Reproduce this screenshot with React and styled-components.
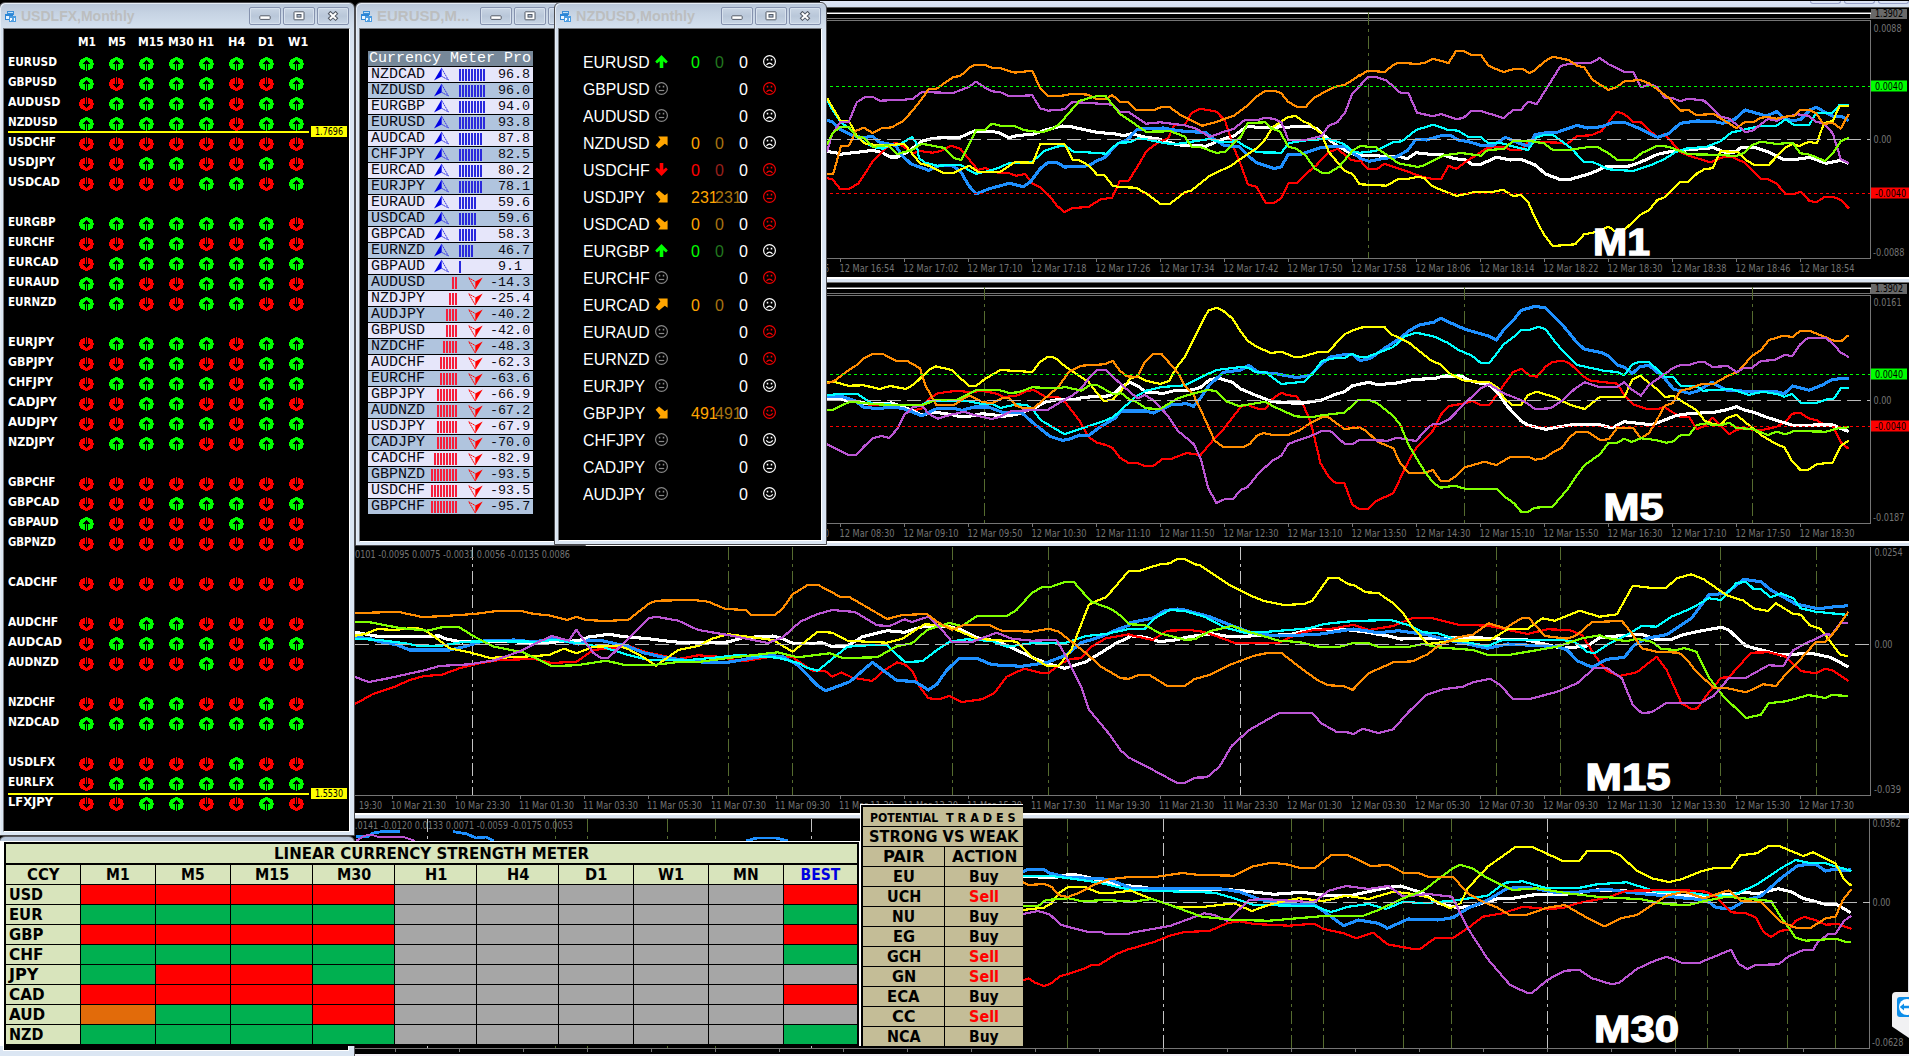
import React, { useLayoutEffect, useRef, useState } from 'react';
import styled, { createGlobalStyle, css } from 'styled-components';

const TAHOMA = "'DejaVu Sans Condensed', 'DejaVu Sans', sans-serif";
const ARIAL = "'Liberation Sans', Arial, sans-serif";
const MONO = "'Liberation Mono', 'Courier New', monospace";

const GlobalStyle = createGlobalStyle`
  html, body { margin: 0; padding: 0; background: #000; overflow: hidden; }
  *, *::before, *::after { box-sizing: border-box; }
`;

/* ---------- text squeezed to a known width ---------- */

const FitBox = styled.span`
  display: inline-block;
  flex: none;
  width: ${(p) => p.$w}px;
  white-space: pre;
  text-align: left;
`;
const FitInner = styled.span`
  display: inline-block;
  transform-origin: 0 50%;
`;
function Fit({ w, children }) {
  const ref = useRef(null);
  const [k, setK] = useState(1);
  useLayoutEffect(() => {
    if (ref.current) setK(w / ref.current.offsetWidth);
  }, [w, children]);
  return (
    <FitBox $w={w}>
      <FitInner ref={ref} style={{ transform: `scaleX(${k})` }}>{children}</FitInner>
    </FitBox>
  );
}

/* ---------- desktop and windows ---------- */

const Desktop = styled.main`
  position: relative;
  width: 1909px;
  height: 1056px;
  overflow: hidden;
  background: #000;
  font-family: ${TAHOMA};
  font-stretch: condensed;
`;

const WindowFrame = styled.section`
  position: absolute;
  left: ${(p) => p.$x}px;
  top: ${(p) => p.$y}px;
  width: ${(p) => p.$w}px;
  height: ${(p) => p.$h}px;
  display: flex;
  flex-direction: column;
  padding: 0 4px 3px 3px;
  border: 1px solid #4b4b4f;
  border-radius: 6px 6px 0 0;
  background: linear-gradient(#b7c5d8 0, #c6d3e3 10px, #d5e1ef 26px, #dbe6f3 60px);
  box-shadow: inset 1px 1px 0 #e6edf6;
`;
const TitleBar = styled.header`
  display: flex;
  align-items: center;
  height: 25px;
  flex: none;
  padding: 1px 1px 0 2px;
`;
const TitleText = styled.div`
  flex: 1;
  min-width: 0;
  margin-left: 5px;
  overflow: hidden;
  font: bold 14.5px/20px ${ARIAL};
  color: #bcbebf;
`;
const Buttons = styled.div`
  display: flex;
  gap: 2px;
  flex: none;
`;
const FrameButton = styled.span`
  display: flex;
  align-items: center;
  justify-content: center;
  width: 32px;
  height: 18px;
  border: 1px solid #8592ae;
  border-radius: 2px;
  background: linear-gradient(#c9d5e4, #b9c7d9 50%, #c8d5e5);
  box-shadow: inset 0 0 0 1px #d7e1ed;
`;
const Client = styled.div`
  position: relative;
  flex: 1;
  min-height: 0;
  overflow: hidden;
  background: #000;
  border: 1px solid;
  border-color: #77797e #fff #fff #77797e;
`;

function AppIcon() {
  return (
    <svg width="11" height="11" viewBox="0 0 11 11" shapeRendering="crispEdges">
      <rect x="2" y="0" width="7" height="4" fill="#3c8fd8" />
      <rect x="3" y="1" width="5" height="1" fill="#bfe0fa" />
      <rect x="0" y="3" width="8" height="6" fill="#2d86d6" />
      <rect x="1" y="5" width="6" height="3" fill="#e8f4ff" />
      <rect x="4" y="5" width="7" height="6" fill="#4a9be0" />
      <rect x="5" y="7" width="5" height="3" fill="#f4faff" />
      <path d="M6 9h1v-2h1v2h1" stroke="#5aa4e2" fill="none" />
    </svg>
  );
}
function Glyph({ kind }) {
  return (
    <svg width="12" height="10" viewBox="0 0 12 10">
      {kind === 'min' && <rect x=".8" y="4.8" width="10.400" height="3.600" rx=".8" fill="#fff" stroke="#535a66" strokeWidth="1" />}
      {kind === 'max' && (
        <>
          <rect x="1" y=".8" width="10" height="8" rx=".6" fill="#fff" stroke="#535a66" />
          <rect x="4" y="3.5" width="4" height="2.600" fill="#aab8cc" stroke="#535a66" />
        </>
      )}
      {kind === 'close' && (
        <>
          <path d="M2 1.2 10 8.6M10 1.2 2 8.6" stroke="#535a66" strokeWidth="4" />
          <path d="M2.8 1.9 9.2 7.9M9.2 1.9 2.8 7.9" stroke="#fff" strokeWidth="2" />
        </>
      )}
    </svg>
  );
}
function Win({ x, y, w, h, title, titleWidth, children }) {
  return (
    <WindowFrame $x={x} $y={y} $w={w} $h={h}>
      <TitleBar>
        <AppIcon />
        <TitleText><Fit w={titleWidth}>{title}</Fit></TitleText>
        <Buttons>
          <FrameButton><Glyph kind="min" /></FrameButton>
          <FrameButton><Glyph kind="max" /></FrameButton>
          <FrameButton><Glyph kind="close" /></FrameButton>
        </Buttons>
      </TitleBar>
      <Client>{children}</Client>
    </WindowFrame>
  );
}

/* ---------- signal matrix ---------- */

const FRAMES = [['M1', 18], ['M5', 18], ['M15', 26], ['M30', 26], ['H1', 16], ['H4', 17], ['D1', 16], ['W1', 20]];
const SIGNALS = `EURUSD UUUUUUUU 49
GBPUSD UDUUUDDU 49
AUDUSD DUUUUDUU 52
NZDUSD UUUUUDUU 49
USDCHF DDDDDDDD 48
USDJPY DDUUDDUD 47
USDCAD DDDDUUDU 52
-
EURGBP UUUUUUUD 48
EURCHF DDUUDDUD 47
EURCAD DUUUUUUU 51
EURAUD UUDDUUUD 51
EURNZD UUDDUUDD 48
-
EURJPY DUUUUDUU 46
GBPJPY DDUUDDUU 46
CHFJPY DUUUUDUU 45
CADJPY DDUUDDUD 49
AUDJPY DDUUUDUU 49
NZDJPY DUUUDDUU 46
-
GBPCHF DDDDDDDD 47
GBPCAD DDDUUUDU 51
GBPAUD UDDDDUDD 51
GBPNZD DDDDDDDD 48
-
CADCHF DDDDDDDD 50
-
AUDCHF DDUUDDDD 50
AUDCAD DUUUUDUU 54
AUDNZD DDDDUDDD 51
-
NZDCHF DDUUDDUD 47
NZDCAD UUUUUUUU 51
-
USDLFX DDDDDUDD 47
EURLFX DUUUUUUU 46
LFXJPY DDUUDDUD 45`.split('\n').map((l) => l.split(' '));

const SignalGrid = styled.div`
  display: grid;
  grid-template-columns: 70px repeat(8, 30px);
  grid-auto-rows: 20px;
  padding: 4px 0 0 4px;
  color: #fff;
  font-weight: bold;
  font-size: 12.5px;
  line-height: 17px;
`;
const SignalCell = styled.div`
  padding: ${(p) => (p.$icon ? '4px 0 0 1px' : '0')};
  line-height: ${(p) => (p.$icon ? 0 : '17px')};
`;
const PriceMark = styled.div`
  position: absolute;
  left: 4px;
  right: 2px;
  top: ${(p) => p.$y}px;
  display: flex;
  align-items: center;
  gap: 2px;
  height: 11px;
  &::before {
    content: '';
    width: 301px;
    height: 2px;
    background: #ff0;
  }
`;
const PriceTag = styled.span`
  display: flex;
  justify-content: center;
  width: 36px;
  height: 11px;
  background: #ff0;
  color: #000;
  font-size: 10.5px;
  line-height: 11px;
`;

function RoundArrow({ up }) {
  const fill = up ? '#00ff00' : '#ff0000';
  return (
    <svg width="15" height="14" viewBox="0 0 15 14" shapeRendering="crispEdges">
      <g transform={up ? undefined : 'matrix(1 0 0 -1 0 14)'}>
        <ellipse cx="7.5" cy="7" rx="7.3" ry="6.7" fill={fill} />
        <path d="M7 3h1v1h1v1h1v1h1v1H9v7H8V7H7v7H6V7H4V6h1V5h1V4h1z" fill="#000" />
      </g>
    </svg>
  );
}
function SignalMatrix() {
  return (
    <>
      <SignalGrid>
        <SignalCell />
        {FRAMES.map(([f, w]) => <SignalCell key={f}><Fit w={w}>{f}</Fit></SignalCell>)}
        {SIGNALS.map(([name, dirs, w], i) =>
          name === '-' ? (
            Array.from({ length: 9 }, (_, j) => <SignalCell key={`${i}-${j}`} />)
          ) : (
            <React.Fragment key={name}>
              <SignalCell><Fit w={+w}>{name}</Fit></SignalCell>
              {[...dirs].map((d, j) => <SignalCell key={j} $icon><RoundArrow up={d === 'U'} /></SignalCell>)}
            </React.Fragment>
          )
        )}
      </SignalGrid>
      <PriceMark $y={97}><PriceTag><Fit w={28}>1.7696</Fit></PriceTag></PriceMark>
      <PriceMark $y={759}><PriceTag><Fit w={28}>1.5530</Fit></PriceTag></PriceMark>
    </>
  );
}

/* ---------- currency meter ---------- */

const METER = [
  ['NZDCAD', 9, '96.8'], ['NZDUSD', 9, '96.0'], ['EURGBP', 9, '94.0'], ['EURUSD', 9, '93.8'],
  ['AUDCAD', 8, '87.8'], ['CHFJPY', 8, '82.5'], ['EURCAD', 8, '80.2'], ['EURJPY', 8, '78.1'],
  ['EURAUD', 6, '59.6'], ['USDCAD', 6, '59.6'], ['GBPCAD', 6, '58.3'], ['EURNZD', 5, '46.7'],
  ['GBPAUD', 1, '9.1'], ['AUDUSD', 2, '-14.3'], ['NZDJPY', 3, '-25.4'], ['AUDJPY', 4, '-40.2'],
  ['GBPUSD', 4, '-42.0'], ['NZDCHF', 5, '-48.3'], ['AUDCHF', 6, '-62.3'], ['EURCHF', 6, '-63.6'],
  ['GBPJPY', 7, '-66.9'], ['AUDNZD', 7, '-67.2'], ['USDJPY', 7, '-67.9'], ['CADJPY', 7, '-70.0'],
  ['CADCHF', 8, '-82.9'], ['GBPNZD', 9, '-93.5'], ['USDCHF', 9, '-93.5'], ['GBPCHF', 9, '-95.7'],
];
const MeterList = styled.div`
  display: grid;
  grid-template-rows: 15px;
  grid-auto-rows: 15px;
  row-gap: 1px;
  width: 165px;
  margin: 22px 0 0 8px;
  font: 15px/16px ${MONO};
  color: #0a0a14;
`;
const MeterHead = styled.div`
  padding-left: 1px;
  background: #778899;
  color: #fff;
  white-space: nowrap;
`;
const MeterRow = styled.div`
  display: grid;
  grid-template-columns: ${(p) => (p.$neg ? '58px 31px 11px 22px 1fr' : '66px 25px 39px 1fr')};
  background: ${(p) => (p.$odd ? '#b0c4de' : '#e6e6fa')};
`;
const MeterName = styled.span`padding-left: 3px;`;
const MeterValue = styled.span`font-size: 13.4px;`;
const Bars = styled.span`
  display: flex;
  align-items: center;
  justify-content: ${(p) => (p.$neg ? 'flex-end' : 'flex-start')};
  gap: 1px;
  height: 15px;
`;
const Bar = styled.i`
  width: 2px;
  height: 12px;
  background: ${(p) => (p.$neg ? '#f5203c' : '#2a2adc')};
`;
const Spacer = styled.span``;

function Dart({ down }) {
  return down ? (
    <svg width="15" height="15" viewBox="0 0 15 15">
      <path d="M7.3 14.5V6.4L14.700 2.600z" fill="#ff0000" />
      <path d="M7.3 14 .8 2.800l6.500 3.800" fill="none" stroke="#ff0000" strokeWidth="1" strokeDasharray="2 .5" />
    </svg>
  ) : (
    <svg width="15" height="15" viewBox="0 0 15 15">
      <path d="M7.700.6V9.600L0 13.600z" fill="#0000e6" />
      <path d="M7.5 1.2 14.400 13 7.500 9.200" fill="none" stroke="#3a3ae6" strokeWidth="1" strokeDasharray="2 .5" />
    </svg>
  );
}
function CurrencyMeter() {
  return (
    <MeterList>
      <MeterHead>Currency Meter Pro</MeterHead>
      {METER.map(([name, n, value], i) => {
        const neg = value[0] === '-';
        const bars = <Bars $neg={neg}>{Array.from({ length: n }, (_, j) => <Bar key={j} $neg={neg} />)}</Bars>;
        return (
          <MeterRow key={name} $neg={neg} $odd={i % 2 === 1}>
            <MeterName>{name}</MeterName>
            {neg ? <>{bars}<Spacer /><Dart down /></> : <><Dart />{bars}</>}
            <MeterValue>{value}</MeterValue>
          </MeterRow>
        );
      })}
    </MeterList>
  );
}

/* ---------- trend list ---------- */

const G = ['#00ff00', '#22771f'];
const O = ['#ffa500', '#a87412'];
const R = ['#ff0000', '#98201c'];
const TRENDS = [
  ['EURUSD', 'up', G, '0', 'sad', 0], ['GBPUSD', 'flat', null, '', 'sad', 1], ['AUDUSD', 'flat', null, '', 'sad', 0],
  ['NZDUSD', 'ne', O, '0', 'sad', 0], ['USDCHF', 'down', R, '0', 'sad', 1], ['USDJPY', 'se', O, '231', 'flat', 1],
  ['USDCAD', 'se', O, '0', 'sad', 1], ['EURGBP', 'up', G, '0', 'sad', 0], ['EURCHF', 'flat', null, '', 'sad', 1],
  ['EURCAD', 'ne', O, '0', 'sad', 0], ['EURAUD', 'flat', null, '', 'sad', 1], ['EURNZD', 'flat', null, '', 'sad', 1],
  ['EURJPY', 'flat', null, '', 'happy', 0], ['GBPJPY', 'se', O, '491', 'happy', 1], ['CHFJPY', 'flat', null, '', 'happy', 0],
  ['CADJPY', 'flat', null, '', 'flat', 0], ['AUDJPY', 'flat', null, '', 'happy', 0],
];
const TrendList = styled.div`
  padding: 20px 0 0 24px;
  font: 16px/27px ${ARIAL};
  color: #fff;
`;
const TrendRow = styled.div`
  display: grid;
  grid-template-columns: 72px 36px 24px 24px 24px 14px;
  height: 27px;
`;
const TrendNum = styled.span`
  width: 0;
  color: ${(p) => p.$c || '#fff'};
`;
const IconCell = styled.span`
  display: flex;
  align-items: center;
  height: 25px;
`;
function Face({ mood, color }) {
  const mouth = { sad: 'M3.500 9.900Q6.500 6.300 9.500 9.900', flat: 'M3.800 8.500h5.400', happy: 'M3.200 7.300Q6.500 11.600 9.800 7.300' }[mood];
  return (
    <svg width="13" height="13" viewBox="0 0 13 13" fill="none" stroke={color} strokeWidth="1.2">
      <circle cx="6.5" cy="6.5" r="5.9" />
      <path d={mouth} />
      <path d="M4.500 3.800v1.800M8.500 3.800v1.800" strokeWidth="1.5" />
    </svg>
  );
}
function TrendArrow({ dir, color }) {
  const straight = 'M6.5 0 12.800 6.600 11 8.600 8.300 6.200V13H4.700V6.200L2 8.600.200 6.600z';
  const diagonal = 'M12.600.400V9.800L9.800 7.800 4 12.600.600 9.200 5.400 3.400 3.200.400z';
  const flip = { up: '', down: 'matrix(1 0 0 -1 0 13)', ne: '', se: 'matrix(1 0 0 -1 0 13)' }[dir];
  return (
    <svg width="13" height="13" viewBox="0 0 13 13">
      <path transform={flip || undefined} d={dir.length === 2 && dir !== 'up' ? diagonal : straight} fill={color} />
    </svg>
  );
}
function Trends() {
  return (
    <TrendList>
      {TRENDS.map(([name, dir, c, n, mood, red]) => (
        <TrendRow key={name}>
          <Fit w={name.endsWith('JPY') ? 62 : 67}>{name}</Fit>
          <IconCell>{dir === 'flat' ? <Face mood="flat" color="#868686" /> : <TrendArrow dir={dir} color={c[0]} />}</IconCell>
          <TrendNum $c={c && c[0]}>{n}</TrendNum>
          <TrendNum $c={c && c[1]}>{n}</TrendNum>
          <TrendNum>0</TrendNum>
          <IconCell><Face mood={mood} color={red ? '#f00000' : '#fff'} /></IconCell>
        </TrendRow>
      ))}
    </TrendList>
  );
}

/* ---------- strength table ---------- */

const STRENGTH = [
  ['USD', 'RRRR', 'R'], ['EUR', 'GGGG', 'G'], ['GBP', 'RRRR', 'R'], ['CHF', 'GGGG', 'G'],
  ['JPY', 'GRRG', '.'], ['CAD', 'RRRR', 'R'], ['AUD', 'OGGR', '.'], ['NZD', 'GGGG', 'G'],
];
const CELL_COLORS = { R: '#ff0000', G: '#00b050', O: '#e26b0a', '.': '#a6a6a6' };
const Sheet = styled.section`
  position: absolute;
  left: 0;
  top: 841px;
  width: 862px;
  height: 205px;
  padding: 1px 2px 0 4px;
  background: #fff;
`;
const StrengthTable = styled.div`
  display: grid;
  grid-template-columns: 74px 74px 74px 81px 81px 81px 81px 74px 74px 74px 73px;
  grid-template-rows: 20px;
  grid-auto-rows: 19px;
  gap: 1px;
  width: 855px;
  height: 204px;
  padding: 2px;
  background: #000;
  color: #000;
  font-weight: bold;
  font-size: 15.5px;
  line-height: 20px;
`;
const SheetCell = styled.div`
  display: flex;
  justify-content: ${(p) => (p.$left ? 'flex-start' : 'center')};
  padding-left: ${(p) => (p.$left ? 3 : 0)}px;
  background: ${(p) => p.$bg || '#d8e4bc'};
  color: ${(p) => p.$color || '#000'};
  ${(p) => p.$wide && css`grid-column: 1 / -1; margin-bottom: 1px;`}
  white-space: nowrap;
`;
const HEADS = [['CCY', 33], ['M1', 24], ['M5', 24], ['M15', 34], ['M30', 34], ['H1', 22], ['H4', 22], ['D1', 22], ['W1', 26], ['MN', 26], ['BEST', 40]];
function StrengthSheet() {
  return (
    <Sheet>
      <StrengthTable>
        <SheetCell $wide><Fit w={315}>LINEAR CURRENCY STRENGTH METER</Fit></SheetCell>
        {HEADS.map(([h, w]) => (
          <SheetCell key={h} $color={h === 'BEST' ? '#0000e0' : '#000'}><Fit w={w}>{h}</Fit></SheetCell>
        ))}
        {STRENGTH.map(([ccy, row, best]) => (
          <React.Fragment key={ccy}>
            <SheetCell $left><Fit w={ccy === 'JPY' ? 30 : ccy === 'AUD' || ccy === 'CAD' ? 36 : 34}>{ccy}</Fit></SheetCell>
            {[...row, '.', '.', '.', '.', '.', best].map((c, j) => <SheetCell key={j} $bg={CELL_COLORS[c]} />)}
          </React.Fragment>
        ))}
      </StrengthTable>
    </Sheet>
  );
}

const TradesBox = styled.section`
  position: absolute;
  left: 860px;
  top: 804px;
  width: 163px;
  height: 242px;
  border: solid #fff;
  border-width: 1px 0 0 1px;
`;
const TradesTable = styled.div`
  display: grid;
  grid-template-columns: 81px 78px;
  grid-template-rows: 19px;
  grid-auto-rows: 19px;
  gap: 1px;
  height: 241px;
  padding: 2px 0 0 2px;
  background: #000;
  font-weight: bold;
  font-size: 15.5px;
  line-height: 19px;
`;
const TradeCell = styled.div`
  display: flex;
  align-items: center;
  justify-content: center;
  gap: 8px;
  ${(p) => p.$wide && css`grid-column: 1 / -1;`}
  padding-top: ${(p) => (p.$small ? 3 : 1)}px;
  background: #c4bd97;
  color: ${(p) => p.$color || '#000'};
  font-size: ${(p) => (p.$small ? 12.5 : 15.5)}px;
  line-height: ${(p) => (p.$small ? 16 : 19)}px;
`;
const TRADES = [['EU', 1, 22], ['UCH', 0, 34], ['NU', 1, 23], ['EG', 1, 22], ['GCH', 0, 34], ['GN', 0, 24], ['ECA', 1, 33], ['CC', 0, 23], ['NCA', 1, 34]];
function TradesPanel() {
  return (
    <TradesBox>
      <TradesTable>
        <TradeCell $wide $small><Fit w={68}>POTENTIAL</Fit><Fit w={70}>T R A D E S</Fit></TradeCell>
        <TradeCell $wide><Fit w={149}>STRONG VS WEAK</Fit></TradeCell>
        <TradeCell><Fit w={42}>PAIR</Fit></TradeCell>
        <TradeCell><Fit w={65}>ACTION</Fit></TradeCell>
        {TRADES.map(([p, buy, w]) => (
          <React.Fragment key={p}>
            <TradeCell><Fit w={w}>{p}</Fit></TradeCell>
            <TradeCell $color={buy ? '#000' : '#ff0000'}><Fit w={30}>{buy ? 'Buy' : 'Sell'}</Fit></TradeCell>
          </React.Fragment>
        ))}
      </TradesTable>
    </TradesBox>
  );
}

/* ---------- charts ---------- */

const ChartWindow = styled.section`
  position: absolute;
  left: ${(p) => p.$x}px;
  top: ${(p) => p.$y}px;
  width: ${(p) => 1909 - p.$x}px;
  height: ${(p) => p.$h}px;
  display: flex;
  flex-direction: column;
  background: #000;
`;
const Plot = styled.svg`
  display: block;
  flex: 1;
  min-height: 0;
  width: 100%;
  overflow: visible;
`;
const TopEdge = styled.div`
  display: flex;
  justify-content: flex-end;
  gap: 3px;
  height: 7px;
  margin-top: 1px;
  flex: none;
  background: linear-gradient(#dfe6f5, #d3dff0);
  border-bottom: 1px solid #5a5a5a;
`;
const TopButton = styled.i`
  width: 31px;
  height: 3px;
  border: 1px solid #98a2c8;
  border-top: 0;
  border-radius: 0 0 3px 3px;
`;
const BottomEdge = styled.div`
  height: 6px;
  flex: none;
  border-bottom: 1px solid #707070;
  background: linear-gradient(#fff 2px, #dbe5f2 2px);
`;

const C = { w: '#ffffff', b: '#1e90ff', a: '#00ffff', y: '#ffff00', o: '#ff8c00', p: '#ba55d3', g: '#7fff00', r: '#ff0000' };

// Each series is sampled in one or more tiles: origin and samples per pixel on both axes.
const T = {
  m1: [[820, 0, 2.8509, 3], [1360, 0, 2.8561, 3]],
  m5: [[820, 275, 2.8509, 3], [1360, 275, 2.8561, 3]],
  m15: [[350, 540, 2.0103, 3], [1130, 540, 2.0128, 3]],
  m30: [[600, 790, 2.6133, 3], [1130, 540, 2.0128, 3]],
};
const toPoints = (tiles, parts) =>
  parts.flatMap((part, i) => {
    const [ox, oy, kx, ky] = tiles[i];
    return part.trim().split(/\s+/).map((s) => {
      const [x, y] = s.split(',').map(Number);
      return `${(ox + x / kx).toFixed(1)},${(oy + y / ky).toFixed(1)}`;
    });
  }).join(' ');

const M1 = [
  ['w', '20,455 40,457 58,463 80,460 120,455 150,451 180,459 200,471 222,471 245,459 265,444 290,424 310,418 340,413 370,413 400,412 420,402 440,393 490,394 515,400 538,413 560,407 610,402 650,388 690,378 710,379 745,387 790,397 850,403 865,407 890,401 925,411 965,417 1010,432 1040,437 1080,437 1100,439 1120,430 1155,415 1180,408 1200,392 1220,378 1250,383 1275,382 1300,386 1310,377 1330,383 1350,379 1400,380 1420,388 1440,409 1470,434 1500,452 1520,462 1538,466',
    '0,467 50,467 70,471 110,469 135,476 160,458 200,463 240,465 270,476 300,479 320,493 345,493 390,472 430,480 460,478 500,495 530,522 570,538 600,538 660,520 700,501 770,498 800,487 850,463 880,456 930,450 1010,443 1040,456 1070,456 1090,442 1130,443 1170,457 1210,479 1240,479 1285,472 1330,490 1375,481 1396,491'],
  ['r', '20,535 35,537 58,567 82,567 110,550 150,485 190,443 215,428 240,441 265,460 285,453 320,458 345,453 375,437 400,446 425,478 450,510 470,504 500,517 540,520 560,527 585,522 605,550 628,562 655,589 675,617 697,636 720,624 765,621 800,598 833,593 855,543 880,542 905,500 930,455 950,437 970,425 992,415 1010,375 1040,375 1060,338 1085,326 1130,335 1155,362 1175,430 1200,495 1220,553 1245,561 1270,608 1295,608 1315,595 1335,550 1360,548 1385,522 1415,496 1450,457 1475,447 1515,480 1538,484',
    '0,481 22,506 50,506 70,491 120,509 180,531 205,536 232,537 253,497 275,507 300,487 365,443 408,440 430,450 460,450 480,425 570,428 590,433 620,408 660,406 690,393 733,335 755,342 780,366 802,367 850,413 870,402 915,456 940,467 1000,487 1040,470 1060,470 1100,488 1145,536 1165,538 1190,551 1215,582 1240,582 1258,575 1283,602 1303,607 1328,590 1350,590 1373,600 1396,625'],
  ['b', '20,361 35,365 60,390 90,405 120,413 150,409 170,427 215,436 235,468 260,492 310,511 340,497 375,496 400,513 425,558 445,582 480,567 540,550 580,560 600,545 628,506 650,487 675,487 697,501 740,500 765,497 790,482 810,474 850,430 875,420 905,388 980,384 1020,392 1100,398 1130,423 1155,437 1195,440 1220,467 1245,488 1295,506 1315,500 1335,463 1370,463 1430,442 1495,438 1520,460 1538,472',
    '0,475 25,484 70,475 100,472 135,452 160,418 190,420 235,406 260,407 280,420 310,425 345,436 380,436 415,412 455,430 480,438 500,404 530,398 560,398 620,376 650,384 690,380 720,368 755,367 800,386 850,412 880,402 915,370 960,363 1010,364 1035,370 1070,358 1100,330 1160,348 1190,335 1215,358 1240,362 1260,357 1285,330 1303,322 1350,349 1375,349 1396,362'],
  ['a', '20,300 30,320 60,368 85,385 110,415 130,430 155,442 180,446 200,436 225,435 262,411 275,430 282,474 300,488 335,497 400,494 425,511 445,521 480,513 510,503 540,489 605,485 640,453 675,440 700,437 722,455 760,457 815,461 850,428 885,427 905,415 930,418 975,428 1010,433 1060,425 1110,417 1145,427 1190,424 1210,438 1245,457 1315,458 1335,430 1375,422 1450,416 1495,433 1520,455 1538,458',
    '0,458 45,453 95,427 120,424 160,390 210,374 250,389 280,392 310,411 345,411 365,429 405,430 440,440 480,450 505,412 530,404 550,404 600,442 640,486 665,486 710,508 780,513 830,496 870,477 900,457 930,446 990,440 1030,424 1060,398 1100,388 1150,377 1190,377 1215,358 1240,375 1283,375 1303,339 1350,338 1370,314 1396,314'],
  ['y', '20,294 58,362 82,362 105,408 130,432 185,437 240,431 285,490 310,497 350,518 382,518 425,497 450,515 515,515 555,487 607,488 628,432 697,432 720,479 740,481 765,496 790,524 810,525 835,557 850,561 900,563 930,580 970,611 998,611 1040,577 1060,571 1110,528 1170,498 1220,462 1245,445 1270,417 1290,382 1335,351 1355,348 1375,362 1400,375 1430,401 1450,455 1495,512 1518,522 1538,553',
    '0,553 75,557 110,537 135,537 165,530 185,535 205,558 275,588 330,576 375,577 408,569 438,588 460,585 480,606 500,654 525,703 550,738 615,733 640,703 680,695 710,680 730,695 760,685 800,645 825,631 850,599 870,592 915,546 938,545 965,518 985,507 1007,505 1030,453 1080,457 1105,482 1125,494 1168,494 1190,470 1215,442 1235,432 1255,438 1280,426 1305,429 1325,370 1350,363 1370,318 1396,317'],
  ['p', '20,455 35,402 58,366 82,365 105,307 130,290 150,290 170,302 240,299 265,296 290,276 380,279 425,260 445,245 470,263 490,274 515,277 540,289 605,286 628,325 650,332 697,328 720,306 780,310 835,314 855,335 880,336 930,371 970,367 1040,376 1075,387 1110,411 1150,396 1180,386 1210,361 1250,359 1270,353 1295,357 1315,367 1335,420 1385,420 1430,408 1450,377 1475,367 1497,337 1518,280 1538,258',
    '0,257 22,231 45,231 75,241 115,278 138,279 163,338 208,349 232,342 275,357 295,354 318,333 345,333 410,354 437,330 460,329 480,305 505,312 550,236 573,198 597,191 660,189 685,174 710,193 755,216 780,216 802,262 830,253 850,263 870,293 890,294 915,303 937,296 983,302 1030,350 1055,356 1080,378 1100,396 1120,393 1165,357 1190,362 1215,351 1250,343 1280,347 1303,365 1325,371 1350,400 1373,477 1396,489'],
  ['o', '20,521 38,521 60,438 82,437 103,392 125,383 150,399 175,385 205,382 240,361 280,311 310,268 332,266 380,231 400,228 430,200 445,194 468,194 490,203 515,205 555,218 605,212 628,265 650,287 690,287 720,281 765,284 785,296 815,297 833,285 855,305 880,307 902,331 955,329 975,320 995,320 1025,343 1050,356 1090,377 1130,366 1160,354 1180,347 1220,316 1245,290 1270,272 1295,272 1315,280 1335,306 1360,320 1385,321 1405,296 1450,269 1470,260 1495,255 1520,239 1538,225',
    '0,227 22,212 70,216 95,195 110,188 165,192 185,188 208,176 253,189 275,152 297,153 317,165 345,165 368,198 410,216 440,207 465,207 483,219 500,210 525,186 550,170 595,180 620,197 640,202 665,240 710,270 735,260 755,244 800,240 825,250 880,292 915,332 938,330 960,345 1010,342 1075,384 1100,366 1125,366 1145,353 1165,351 1190,356 1215,350 1240,347 1258,330 1285,330 1303,340 1323,372 1350,368 1373,386 1396,341'],
  ['g', '20,435 35,400 60,380 82,381 105,410 125,413 150,441 195,435 220,462 260,451 290,431 315,436 355,444 382,474 403,480 445,390 470,390 490,371 515,377 555,378 580,390 630,397 655,390 680,375 740,302 790,288 815,289 855,342 930,395 1000,394 1040,410 1060,440 1085,441 1130,459 1155,455 1200,410 1220,369 1270,367 1290,387 1310,393 1335,440 1360,447 1385,467 1410,505 1430,518 1450,519 1480,500 1520,450 1538,440',
    '0,438 45,442 70,460 110,490 165,501 185,495 240,466 290,459 345,467 365,450 410,447 437,423 480,422 525,430 550,449 600,449 660,440 680,442 710,460 735,480 780,480 805,459 850,437 880,440 940,463 1010,464 1075,468 1100,457 1120,435 1145,425 1190,432 1235,428 1258,460 1285,464 1328,483 1350,460 1373,424 1396,413'],
];
const M5 = [
  ['r', '20,367 60,370 100,378 130,388 230,392 265,408 290,400 310,372 335,355 390,347 430,352 460,347 500,355 525,366 560,362 590,348 610,345 645,367 680,367 700,383 740,437 765,485 790,503 815,510 835,520 855,548 880,564 905,564 925,573 950,573 975,553 1000,552 1045,534 1085,540 1110,508 1150,463 1200,395 1220,390 1250,402 1270,402 1290,372 1315,353 1330,360 1358,364 1380,395 1400,445 1427,565 1450,605 1470,624 1495,625 1518,690 1538,702',
    '0,702 22,702 48,677 95,655 115,610 140,555 160,520 210,465 230,420 255,393 300,385 320,378 345,390 370,390 400,345 437,292 460,281 485,302 505,305 530,275 550,261 580,257 600,266 640,306 660,317 735,326 755,360 780,388 820,402 850,402 870,396 893,412 915,427 940,427 962,462 985,453 1007,428 1030,452 1055,477 1075,465 1100,459 1130,466 1150,465 1190,455 1215,440 1235,416 1258,413 1280,430 1305,436 1328,450 1350,452 1373,502 1396,522'],
  ['w', '20,370 100,378 125,384 155,386 205,384 235,395 265,407 290,420 330,412 370,418 395,424 425,424 460,416 480,418 525,424 560,418 610,400 640,382 680,373 725,374 750,367 820,363 840,355 860,334 885,322 905,332 930,352 980,355 1010,347 1060,345 1085,337 1110,315 1135,309 1175,322 1200,342 1245,362 1290,380 1345,384 1380,384 1430,375 1470,358 1495,350 1518,332 1538,328',
    '0,327 25,322 50,329 105,324 155,313 210,311 240,303 290,303 310,316 370,331 395,355 420,393 460,438 480,451 530,463 560,457 600,450 680,448 720,459 755,440 820,448 840,447 905,421 940,416 1010,412 1045,405 1075,395 1100,406 1120,410 1165,428 1240,452 1300,450 1350,450 1396,470'],
  ['b', '20,364 60,364 100,378 125,397 170,401 200,396 235,400 265,412 290,422 335,400 380,400 405,406 440,396 480,396 520,412 575,413 610,446 655,484 690,496 710,493 740,480 765,482 800,455 840,430 860,408 930,408 950,414 1000,390 1045,386 1065,394 1085,368 1110,330 1150,292 1200,285 1222,271 1250,292 1300,296 1360,308 1400,300 1425,270 1455,246 1500,238 1520,240 1538,256',
    '0,257 30,250 70,220 115,190 140,167 170,150 210,142 230,130 255,142 300,163 350,178 370,184 390,195 410,165 440,133 460,106 500,94 530,99 580,152 620,203 640,222 690,233 710,243 735,270 755,277 778,295 800,275 825,271 870,310 895,342 940,355 965,348 1005,322 1045,345 1080,348 1190,350 1212,356 1235,333 1283,346 1320,330 1350,313 1396,310'],
  ['a', '20,361 60,356 105,356 150,386 240,391 290,390 310,378 425,379 460,387 490,386 515,399 560,388 590,390 605,402 630,436 697,478 735,464 800,442 835,427 900,365 930,347 975,336 1040,331 1080,310 1130,285 1200,276 1220,278 1240,290 1270,292 1315,327 1380,320 1405,296 1430,258 1475,248 1495,250 1515,236 1538,246',
    '0,247 20,246 95,216 130,183 160,173 210,184 250,203 280,224 320,242 345,264 370,264 410,208 440,185 460,166 485,164 510,155 530,163 560,205 595,245 620,270 700,288 735,291 755,301 778,268 800,260 825,260 870,305 895,307 915,332 965,335 980,347 1060,342 1110,360 1150,350 1190,357 1212,365 1235,357 1258,383 1305,383 1330,374 1353,371 1375,338 1396,338'],
  ['y', '20,320 40,320 80,332 125,331 170,342 200,333 245,342 270,326 310,285 330,274 375,285 425,333 445,333 470,312 515,285 605,291 628,260 650,245 670,248 700,275 765,320 790,355 810,378 835,374 860,345 885,310 905,304 930,317 970,327 995,318 1015,280 1040,245 1060,205 1085,150 1107,107 1130,98 1150,108 1175,130 1200,170 1220,198 1245,215 1285,234 1315,230 1350,245 1375,245 1425,230 1450,230 1475,200 1495,178 1520,165 1538,160',
    '0,158 20,156 70,156 90,178 140,203 205,258 230,268 255,295 300,318 370,322 395,340 410,368 435,390 460,390 480,360 505,350 560,368 580,380 610,393 642,402 685,366 755,366 778,313 800,302 845,340 870,366 895,363 960,405 985,437 1010,448 1030,450 1050,428 1075,420 1150,483 1190,508 1212,517 1235,560 1258,585 1280,585 1305,567 1350,563 1373,512 1396,497'],
  ['o', '20,325 40,318 80,287 105,270 125,250 150,237 180,237 215,257 250,259 285,280 300,330 332,391 380,391 425,361 460,380 490,385 520,370 540,370 560,393 580,399 610,399 650,362 680,335 710,290 745,272 810,268 835,258 855,287 875,304 905,306 925,262 950,236 973,236 1020,293 1040,332 1065,360 1090,415 1125,497 1150,516 1207,516 1225,507 1245,482 1265,474 1290,480 1335,480 1365,467 1400,443 1430,427 1450,427 1495,462 1538,457',
    '0,457 20,470 50,500 95,520 115,565 140,594 185,594 208,585 230,617 255,617 275,602 300,577 355,560 390,570 430,545 480,545 500,554 525,550 550,533 575,520 600,485 620,470 650,470 685,495 710,493 735,458 780,458 802,490 825,475 845,440 870,393 893,384 915,347 945,340 975,327 1010,327 1050,303 1080,290 1120,242 1145,226 1168,195 1210,182 1235,186 1258,167 1285,168 1330,187 1355,198 1375,198 1396,180'],
  ['p', '20,508 80,540 103,540 125,515 150,490 175,483 197,489 220,462 240,420 265,397 290,391 310,416 335,431 370,420 410,410 440,420 490,432 515,425 545,408 650,404 680,385 720,361 745,340 765,312 790,286 815,285 855,325 905,370 925,360 950,375 990,420 1020,467 1065,507 1085,550 1107,640 1130,684 1155,672 1178,671 1200,645 1220,635 1250,595 1290,557 1315,542 1335,507 1365,495 1395,485 1430,468 1455,468 1495,506 1520,506 1538,495',
    '0,495 80,497 105,488 160,498 190,462 210,446 230,446 255,433 300,385 345,340 370,328 410,355 440,367 470,380 500,402 545,400 580,375 615,340 642,322 680,335 735,335 755,322 778,345 802,362 825,330 850,312 893,280 915,270 940,270 970,260 985,262 1007,276 1050,273 1075,291 1095,280 1120,278 1145,258 1185,255 1212,240 1235,243 1258,207 1280,188 1328,188 1350,205 1373,233 1396,246'],
  ['g', '20,405 35,405 85,380 125,384 160,388 235,391 290,391 330,375 390,374 445,345 510,345 540,354 565,352 605,337 680,340 700,336 745,347 770,330 790,330 835,357 860,355 880,372 900,380 930,400 970,402 1020,370 1060,357 1105,345 1130,348 1160,380 1195,393 1270,380 1290,393 1355,424 1400,427 1430,421 1495,413 1535,375 1538,375',
    '0,375 25,375 50,385 95,423 115,450 140,512 160,547 185,590 208,622 230,638 270,632 300,641 390,641 410,663 440,685 460,710 480,710 500,698 550,695 595,640 620,600 642,570 685,538 710,503 735,503 755,491 775,501 802,490 845,495 875,503 893,500 915,481 940,480 962,450 990,445 1010,451 1035,450 1055,443 1075,459 1120,462 1165,480 1190,470 1215,478 1240,468 1330,470 1373,458 1396,457'],
];
const M15 = [
  ['w', '10,276 50,288 85,290 180,288 190,296 225,306 260,304 340,306 360,312 420,305 460,302 480,291 520,283 550,290 600,296 640,304 680,309 760,306 790,293 850,288 870,296 890,310 950,309 970,320 1000,318 1030,290 1080,272 1115,277 1150,260 1200,258 1230,270 1260,293 1300,303 1340,330 1380,358 1410,374 1437,385 1480,365 1510,338 1540,310 1566,292',
    '0,287 30,292 60,305 90,300 120,290 165,281 200,290 260,287 320,284 360,270 430,268 470,275 520,288 545,297 620,295 680,291 740,297 800,300 870,325 920,318 945,294 960,290 1030,283 1060,299 1090,298 1110,286 1140,275 1190,262 1205,270 1240,318 1310,345 1370,340 1410,352 1446,381'],
  ['r', '10,492 45,463 90,440 120,420 150,408 185,404 220,385 260,370 300,360 370,357 405,369 455,365 490,330 520,325 560,318 600,338 660,357 700,346 740,350 790,364 840,352 890,352 930,392 955,393 970,410 988,397 1010,413 1050,423 1075,390 1100,367 1115,373 1130,392 1145,440 1163,475 1185,478 1205,468 1230,486 1270,478 1295,460 1320,410 1355,386 1390,399 1405,398 1430,370 1450,356 1470,355 1490,320 1520,295 1566,283',
    '0,285 15,290 45,300 75,272 120,270 150,276 210,308 300,308 340,280 370,270 400,268 450,254 480,270 530,258 570,233 610,235 660,254 720,257 800,282 840,268 885,270 910,285 935,345 960,393 985,408 1020,397 1060,350 1080,390 1110,490 1130,507 1142,505 1165,457 1190,413 1205,412 1250,338 1285,337 1320,350 1350,393 1380,400 1400,386 1415,392 1446,423'],
  ['b', '10,293 40,295 60,305 95,315 120,330 200,330 230,320 270,302 330,300 370,306 410,295 440,306 460,312 480,300 510,303 560,320 590,338 630,352 680,362 720,368 760,367 840,346 870,350 900,375 940,437 955,452 970,445 1005,425 1050,367 1100,422 1135,424 1163,450 1180,432 1200,390 1225,355 1260,355 1290,374 1350,379 1400,368 1440,345 1470,308 1510,290 1540,270 1566,256',
    '0,248 45,235 70,212 95,207 110,210 160,230 200,254 250,281 300,288 380,283 450,267 500,278 540,272 600,285 640,300 720,325 760,312 860,320 880,330 900,362 930,382 960,358 995,352 1015,315 1040,295 1080,284 1130,235 1165,165 1200,160 1235,118 1270,125 1290,150 1340,192 1385,206 1420,200 1446,197'],
  ['a', '10,296 60,300 110,310 140,318 180,318 230,305 290,304 380,305 410,299 460,310 510,322 560,345 600,360 680,360 740,352 780,345 860,353 900,368 920,384 940,392 1000,320 1050,315 1080,315 1115,366 1150,364 1180,330 1205,305 1240,298 1290,303 1320,320 1370,310 1440,308 1480,288 1520,282 1566,267',
    '0,266 30,266 50,235 80,210 110,213 150,230 190,262 230,278 270,276 320,270 360,265 390,252 450,243 525,240 560,255 590,277 620,280 670,305 720,318 750,300 870,300 895,305 920,335 935,340 960,315 1000,285 1030,258 1060,260 1090,230 1130,205 1165,175 1190,180 1220,130 1240,125 1255,147 1270,148 1290,172 1310,160 1335,175 1350,205 1380,215 1446,225'],
  ['y', '10,287 30,282 55,267 90,270 130,263 150,270 170,290 200,325 240,337 280,353 330,352 350,350 400,345 430,326 455,340 490,320 540,318 560,328 590,352 615,377 660,330 700,318 730,295 760,283 800,290 850,300 890,335 940,275 970,278 1000,302 1080,308 1110,296 1155,253 1200,257 1260,296 1340,305 1370,350 1400,377 1425,377 1450,330 1485,195 1500,183 1520,172 1566,92',
    '0,92 20,92 60,73 80,70 95,57 110,57 130,73 140,75 200,135 240,165 270,183 310,195 350,192 367,182 400,113 420,115 440,133 450,135 475,157 500,159 530,190 550,220 570,265 600,312 650,302 725,300 760,268 800,267 830,235 855,242 905,212 945,230 980,223 1012,137 1045,143 1080,143 1100,115 1130,103 1155,118 1200,165 1235,182 1255,205 1285,213 1300,190 1335,222 1350,224 1368,256 1390,267 1430,345 1446,348'],
  ['g', '10,246 40,247 100,264 155,272 190,260 220,262 250,290 290,320 350,338 405,378 455,376 515,362 550,374 610,375 660,366 700,366 760,354 860,337 900,352 965,340 990,354 1060,352 1100,318 1130,310 1160,270 1205,249 1230,258 1260,228 1320,228 1340,210 1370,160 1390,142 1410,140 1440,125 1455,126 1490,185 1530,207 1550,228 1566,253',
    '0,253 30,255 60,280 110,299 130,298 160,274 205,258 240,276 300,302 340,306 380,320 420,321 450,309 480,310 500,321 560,321 590,312 620,322 690,330 720,345 765,344 860,320 910,295 945,286 960,294 1000,304 1020,296 1050,305 1070,327 1100,330 1115,324 1140,335 1165,412 1195,470 1240,534 1270,524 1285,490 1320,484 1345,474 1365,465 1400,474 1412,465 1446,468'],
  ['p', '10,411 38,426 70,417 150,391 180,378 240,373 290,361 340,335 370,313 405,288 440,302 455,269 490,340 505,354 520,353 570,280 600,235 615,230 660,242 700,270 760,285 840,309 870,292 905,245 940,222 970,210 1015,216 1060,256 1085,258 1115,238 1130,246 1163,230 1190,270 1210,305 1250,306 1300,278 1330,296 1370,302 1420,300 1440,350 1470,440 1485,508 1525,580 1550,632 1566,653',
    '0,654 40,685 95,729 110,729 130,713 155,712 180,680 205,617 240,570 300,519 367,519 385,550 415,575 435,576 450,582 468,566 500,579 530,568 560,517 595,466 630,448 670,440 690,427 725,416 745,435 770,476 805,477 860,455 900,430 935,384 960,384 990,415 1012,495 1030,519 1050,517 1080,488 1150,488 1175,467 1205,415 1240,413 1285,376 1315,378 1335,330 1365,307 1400,283 1412,284 1430,249 1446,248'],
  ['o', '10,219 70,217 95,215 145,231 180,229 250,222 300,212 345,213 370,222 400,226 437,240 455,230 475,240 515,243 560,239 600,192 615,182 690,180 720,185 755,207 795,210 807,225 855,224 870,205 890,163 920,135 940,134 985,170 1005,172 1080,237 1110,225 1160,222 1180,245 1210,270 1235,254 1285,255 1310,272 1370,275 1405,266 1425,275 1480,340 1510,380 1550,415 1566,416',
    '0,415 20,404 40,406 75,438 110,438 130,417 160,405 200,375 250,347 280,338 305,339 340,380 380,423 400,436 430,438 448,450 480,400 530,367 570,364 600,342 620,318 660,292 690,284 722,250 755,265 790,233 803,234 835,288 880,296 900,285 930,246 990,243 1010,280 1030,325 1060,335 1105,338 1120,357 1140,395 1175,443 1200,444 1240,457 1275,433 1300,438 1320,403 1350,357 1380,307 1400,305 1420,272 1446,215'],
];
const M30 = [
  ['w', '1105,259 1190,263 1225,253 1245,255 1280,263 1310,272 1350,282 1383,288',
    '0,1038 20,1040 60,1050 140,1050 190,1048 230,1053 290,1063 345,1057 390,1065 440,1068 480,1055 520,1042 545,1038 590,1060 620,1090 660,1103 690,1098 740,1076 770,1075 810,1065 880,1062 940,1050 1000,1053 1040,1060 1100,1065 1150,1070 1190,1065 1240,1057 1260,1062 1305,1046 1330,1055 1355,1075 1400,1093 1425,1095 1450,1118'],
  ['b', '1105,245 1118,238 1158,238 1175,249 1220,262 1280,265 1330,268 1383,292',
    '0,1045 60,1045 180,1046 220,1055 260,1078 320,1093 370,1093 400,1125 430,1157 460,1140 500,1150 518,1165 560,1137 620,1140 650,1133 680,1105 720,1080 760,1045 800,1042 860,1058 900,1057 960,1048 1010,1058 1060,1065 1120,1075 1160,1080 1180,1103 1210,1106 1240,1080 1270,1068 1310,1015 1345,976 1380,973 1400,993 1420,987 1440,992 1452,988'],
  ['a', '1105,259 1180,258 1240,267 1300,277 1350,290 1383,299',
    '0,1050 60,1053 170,1058 210,1075 250,1095 370,1098 405,1116 440,1100 480,1092 515,1107 550,1085 590,1090 650,1082 720,1067 755,1028 790,1024 840,1045 900,1045 940,1033 1000,1027 1060,1055 1110,1055 1160,1065 1210,1068 1260,1035 1310,985 1340,960 1365,968 1400,970 1452,993'],
  ['r', '1105,571 1120,565 1135,577 1160,588 1180,580 1200,560 1265,536 1285,525 1305,524 1350,492 1383,477',
    '0,1227 50,1205 80,1187 110,1176 160,1173 195,1150 220,1144 250,1152 320,1157 370,1151 390,1167 430,1180 455,1195 490,1178 518,1213 570,1227 585,1226 615,1193 650,1194 680,1165 710,1130 750,1120 790,1100 830,1106 870,1105 900,1090 960,1073 1000,1052 1110,1050 1160,1055 1180,1070 1210,1117 1240,1120 1260,1133 1275,1175 1290,1191 1310,1172 1325,1170 1340,1142 1357,1131 1380,1140 1400,1154 1425,1152 1452,1167'],
  ['y', '1105,360 1160,353 1180,340 1200,308 1225,290 1265,290 1305,309 1340,308 1383,303',
    '0,1051 40,1075 90,1100 140,1102 210,1090 245,1113 290,1090 340,1075 390,1083 435,1067 480,1077 530,1055 570,1062 600,1072 645,1105 665,1090 680,1045 720,980 775,922 810,921 870,962 905,962 920,933 965,932 985,944 1020,992 1050,1015 1085,1026 1110,1018 1150,994 1180,983 1210,983 1228,946 1262,940 1285,918 1305,917 1355,948 1375,937 1420,970 1437,1018 1452,1037'],
  ['p', '1105,372 1145,363 1175,373 1205,405 1280,427 1310,426 1320,432 1383,432',
    '0,1179 80,1158 150,1120 170,1125 195,1142 240,1080 270,1077 370,1087 400,1052 435,1038 480,1047 520,1038 550,1070 600,1062 648,1070 680,1165 720,1257 765,1335 800,1359 810,1358 840,1320 875,1292 905,1290 930,1315 970,1333 985,1328 1020,1287 1050,1266 1080,1250 1110,1268 1145,1269 1210,1229 1225,1272 1243,1287 1260,1275 1305,1273 1325,1250 1355,1230 1375,1229 1385,1205 1405,1183 1420,1182 1437,1143 1452,1127'],
  ['g', '1105,347 1145,348 1165,330 1225,325 1260,334 1320,330 1383,334',
    '0,1086 45,1077 80,1095 145,1130 210,1140 280,1142 390,1128 470,1127 500,1110 550,1075 590,1052 650,985 665,974 690,986 720,1015 770,1050 820,1045 880,1060 940,1070 1030,1078 1080,1093 1125,1095 1150,1085 1200,1070 1290,1083 1310,1130 1340,1193 1360,1202 1420,1196 1440,1205 1452,1206'],
  ['o', '1105,277 1120,285 1160,282 1180,290 1198,315 1222,321 1250,310 1290,285 1330,268 1383,261',
    '0,1010 55,1010 105,999 140,1005 210,1007 245,980 285,968 320,974 340,983 373,983 405,945 437,944 485,978 520,975 550,998 580,999 600,1010 650,1010 680,1060 710,1085 740,1103 765,1126 795,1126 840,1103 875,1095 920,1133 955,1159 990,1134 1020,1125 1080,1067 1115,1055 1155,1075 1205,1051 1230,1082 1270,1087 1310,1145 1340,1163 1370,1164 1400,1135 1420,1130 1435,1080 1452,1048'],
];

const Series = ({ tiles, data }) => (
  <g fill="none" strokeLinejoin="round" shapeRendering="crispEdges">
    {data.map(([c, ...parts]) => (
      <polyline key={c} points={toPoints(tiles, parts)} stroke={C[c]} strokeWidth={c === 'w' || c === 'b' ? 3.1 : 2.2} />
    ))}
  </g>
);

const SvgText = styled.text`
  font-family: ${TAHOMA};
  font-stretch: condensed;
  font-size: 10.6px;
`;
const BigLabel = styled.text`
  font: bold 37px ${ARIAL};
  fill: #fff;
  stroke: #fff;
  stroke-width: 1.3px;
`;
const Txt = ({ x, y, w, fill = '#747474', children }) => (
  <SvgText x={x} y={y + 3.6} textLength={w} lengthAdjust="spacingAndGlyphs" fill={fill}>{children}</SvgText>
);
const VLine = ({ x, y1, y2, light }) => (
  <path d={`M${Math.floor(x) + 0.5} ${y1}V${y2}`} stroke={light ? '#c4c4c4' : '#556b2f'} strokeDasharray="13 4 3 4" shapeRendering="crispEdges" />
);
const ZeroLine = ({ x, y }) => (
  <path d={`M${x} ${y}H1870`} stroke="#b9b9b9" strokeDasharray="14 6" shapeRendering="crispEdges" />
);
const Level = ({ y, color }) => (
  <path d={`M830 ${y}H1870`} stroke={color} strokeDasharray="3 3" shapeRendering="crispEdges" />
);
const Axis = ({ x, y, right, top, ticks }) => (
  <g stroke="#757575" shapeRendering="crispEdges" fill="none">
    <path d={`M${x} ${y}.5H${right}.5V${top}`} />
    {ticks.map((t) => <path key={t} d={`M${t}.5 ${y}v4`} />)}
  </g>
);
const Tag = ({ y, label, color, w = 36, tw = 28 }) => (
  <g>
    <rect x="1871" y={y - 5.5} width={w} height="11" fill={color} />
    <Txt x={1875} y={y} w={tw} fill="#000">{label}</Txt>
  </g>
);
const Scale = ({ items, x = 1873.5 }) => items.map(([label, y]) => (
  <Txt key={label + y} x={label[0] === '-' ? x - 0.5 : x} y={y} w={label.length * 4.5 + (label[0] === '-' ? 0 : 1) - (label.length === 4 ? 1 : 0)}>{label}</Txt>
));
const PricePane = ({ y }) => (
  <g shapeRendering="crispEdges" fill="none">
    <path d={`M827 ${y}.5H1870V${y + 6}.5H827M827 ${y + 8}.5H1870.5`} stroke="#757575" />
    <path d={`M827 ${y + 1}.5H1872`} stroke="#fff" />
    <rect x="1871" y={y - 3} width="36" height="10" fill="#696969" />
    <Txt x={1875} y={y + 1.2} w={28} fill="#000">1.3902</Txt>
  </g>
);

const stamp = (start, stepMin, k) => {
  const total = start[0] * 1440 + start[1] * 60 + start[2] + stepMin * k;
  const two = (n) => String(n).padStart(2, '0');
  return `${Math.floor(total / 1440)} Mar ${two(Math.floor((total % 1440) / 60))}:${two(total % 60)}`;
};
const TimeAxis = ({ x0, n, start, step, y }) =>
  Array.from({ length: n }, (_, k) => (
    <Txt key={k} x={x0 + 64 * k} y={y} w={55}>{stamp(start, step, k)}</Txt>
  ));
const ticksFrom = (x0, n) => Array.from({ length: n }, (_, k) => x0 + 64 * k);

function ChartM1() {
  return (
    <ChartWindow $x={820} $y={0} $h={283}>
      <TopEdge><TopButton /><TopButton /><TopButton /></TopEdge>
      <Plot viewBox="820 8 1089 269" preserveAspectRatio="none">
        <PricePane y={12} />
        <VLine x={1368} y1={12} y2={258} />
        <Axis x={827} y={258} right={1870} top={20} ticks={ticksFrom(840, 16)} />
        <Series tiles={T.m1} data={M1} />
        <ZeroLine x={827} y={139.5} />
        <Level y={86.5} color="#00ff00" />
        <Level y={193.5} color="#ff0000" />
        <Txt x={820} y={268} w={9}>46</Txt>
        <TimeAxis x0={839.5} n={16} start={[12, 16, 54]} step={8} y={268} />
        <Scale items={[['0.0088', 28], ['0.00', 139], ['-0.0088', 252]]} />
        <Tag y={86} label="0.0040" color="#00ff00" />
        <Tag y={193} label="-0.0040" color="#ff0000" w={38} tw={31} />
        <BigLabel x="1593" y="255" textLength="57" lengthAdjust="spacingAndGlyphs">M1</BigLabel>
      </Plot>
      <BottomEdge />
    </ChartWindow>
  );
}
function ChartM5() {
  return (
    <ChartWindow $x={820} $y={283} $h={264}>
      <Plot viewBox="820 283 1089 258" preserveAspectRatio="none">
        <PricePane y={287} />
        {[984, 1464, 1752].map((x) => <VLine key={x} x={x} y1={287} y2={523} />)}
        <Axis x={827} y={523} right={1870} top={295} ticks={ticksFrom(840, 16)} />
        <Series tiles={T.m5} data={M5} />
        <ZeroLine x={827} y={400.5} />
        <Level y={374.5} color="#00ff00" />
        <Level y={426.5} color="#ff0000" />
        <Txt x={820} y={533} w={9}>50</Txt>
        <TimeAxis x0={839.5} n={16} start={[12, 8, 30]} step={40} y={533} />
        <Scale items={[['0.0161', 302], ['0.00', 400], ['-0.0187', 517]]} />
        <Tag y={374} label="0.0040" color="#00ff00" />
        <Tag y={426} label="-0.0040" color="#ff0000" w={38} tw={31} />
        <BigLabel x="1603.500" y="520" textLength="60" lengthAdjust="spacingAndGlyphs">M5</BigLabel>
      </Plot>
      <BottomEdge />
    </ChartWindow>
  );
}
function ChartM15() {
  return (
    <ChartWindow $x={355} $y={546} $h={273}>
      <Plot viewBox="355 546 1554 267" preserveAspectRatio="none">
        {[728, 792, 952, 1048, 1496, 1560, 1720, 1816].map((x) => <VLine key={x} x={x} y1={547} y2={795} />)}
        {[472, 1240].map((x) => <VLine key={x} x={x} y1={547} y2={795} light />)}
        <Axis x={355} y={795} right={1870} top={547} ticks={ticksFrom(392, 23)} />
        <Series tiles={T.m15} data={M15} />
        <ZeroLine x={355} y={644.5} />
        <Txt x={355} y={554.5} w={215}>0101 -0.0095 0.0075 -0.0031 0.0056 -0.0135 0.0086</Txt>
        <Txt x={359} y={805} w={23}>19:30</Txt>
        <TimeAxis x0={391} n={23} start={[10, 21, 30]} step={120} y={805} />
        <Scale x={1874.5} items={[['0.0254', 552.5], ['0.00', 644], ['-0.039', 789]]} />
        <BigLabel x="1585.500" y="789.500" textLength="85" lengthAdjust="spacingAndGlyphs">M15</BigLabel>
      </Plot>
      <BottomEdge />
    </ChartWindow>
  );
}
const FootEdge = styled.div`
  height: 2px;
  flex: none;
  background: #f3f0f6;
`;
function ChartM30() {
  return (
    <ChartWindow $x={355} $y={819} $h={237}>
      <Plot viewBox="355 819 1554 235" preserveAspectRatio="none">
        {[555, 587, 667, 715, 1067, 1291, 1323, 1403, 1451, 1675, 1707, 1787, 1835].map((x) => <VLine key={x} x={x} y1={819} y2={1048} />)}
        {[427, 811, 1163, 1547].map((x) => <VLine key={x} x={x} y1={819} y2={1048} light />)}
        <Axis x={355} y={1048} right={1869} top={819} ticks={ticksFrom(395, 23)} />
        <Series tiles={T.m30} data={M30} />
        <ZeroLine x={1023} y={902.5} />
        <g fill="none" shapeRendering="crispEdges" strokeWidth="2.8" stroke={C.b}>
          <path d="M356 836.5 367 837 373 833 383 831.5H400M453 831.5 467 834 476 838 486 837 494 841M746 841 757 838H776L788 841" />
          <path d="M356 841 364 836 371 834.5 377 836.5H402L415 841" stroke={C.p} strokeWidth="2" />
        </g>
        <Txt x={355} y={825.5} w={218}>.0141 -0.0120 0.0133 0.0071 -0.0059 -0.0175 0.0053</Txt>
        <Scale x={1872.5} items={[['0.0362', 823.5], ['0.00', 902], ['-0.0628', 1042]]} />
        <BigLabel x="1594" y="1042" textLength="85" lengthAdjust="spacingAndGlyphs">M30</BigLabel>
      </Plot>
      <FootEdge />
    </ChartWindow>
  );
}

/* ---------- pieces around the sheet ---------- */

const HiddenWindow = styled.div`
  position: absolute;
  left: -1px;
  top: 836px;
  width: 356px;
  height: 221px;
  padding: 0 5px 5px 3px;
  display: flex;
  flex-direction: column;
  justify-content: flex-end;
  border: 1px solid #5a5a5e;
  border-radius: 6px 6px 0 0;
  background: linear-gradient(#b4c2d6, #dbe6f3 26px);
`;
const HiddenClient = styled.div`
  height: 190px;
  background: #000;
  border: 1px solid #fff;
  border-top: 0;
`;
const SideTab = styled.aside`
  position: absolute;
  right: 0;
  top: 992px;
  width: 17px;
  height: 46px;
  padding: 5px 0 0 5px;
  border-radius: 4px 0 0 0;
  background: #f1f1f3;
  clip-path: polygon(0 0, 100% 0, 100% 100%, 0 75%);
`;
const RightEdge = styled.div`
  position: absolute;
  right: 0;
  top: 819px;
  width: 1px;
  height: 173px;
  background: #d9dde4;
`;
const LevelStrip = styled.div`
  position: absolute;
  left: 585px;
  top: 545px;
  width: 242px;
  height: 1px;
  background: #fff;
`;

export default function App() {
  return (
    <>
      <GlobalStyle />
      <Desktop>
        <ChartM1 />
        <ChartM5 />
        <ChartM15 />
        <ChartM30 />
        <RightEdge />
        <LevelStrip />
        <HiddenWindow><HiddenClient /></HiddenWindow>
        <Win x={355} y={2} w={231} h={544} title="EURUSD,M..." titleWidth={92}><CurrencyMeter /></Win>
        <Win x={554} y={2} w={273} h={543} title="NZDUSD,Monthly" titleWidth={119}><Trends /></Win>
        <Win x={-1} y={2} w={356} h={834} title="USDLFX,Monthly" titleWidth={114}><SignalMatrix /></Win>
        <StrengthSheet />
        <TradesPanel />
        <SideTab>
          <svg width="20" height="20" viewBox="0 0 20 20">
            <rect width="20" height="20" rx="3" fill="#0e8ee9" />
            <circle cx="10" cy="10" r="8" fill="#fff" />
            <path d="M2.8 10 7 6.4v2.3h6V6.4l4.200 3.600L13 13.600v-2.300H7v2.300z" fill="#0e8ee9" />
          </svg>
        </SideTab>
      </Desktop>
    </>
  );
}
